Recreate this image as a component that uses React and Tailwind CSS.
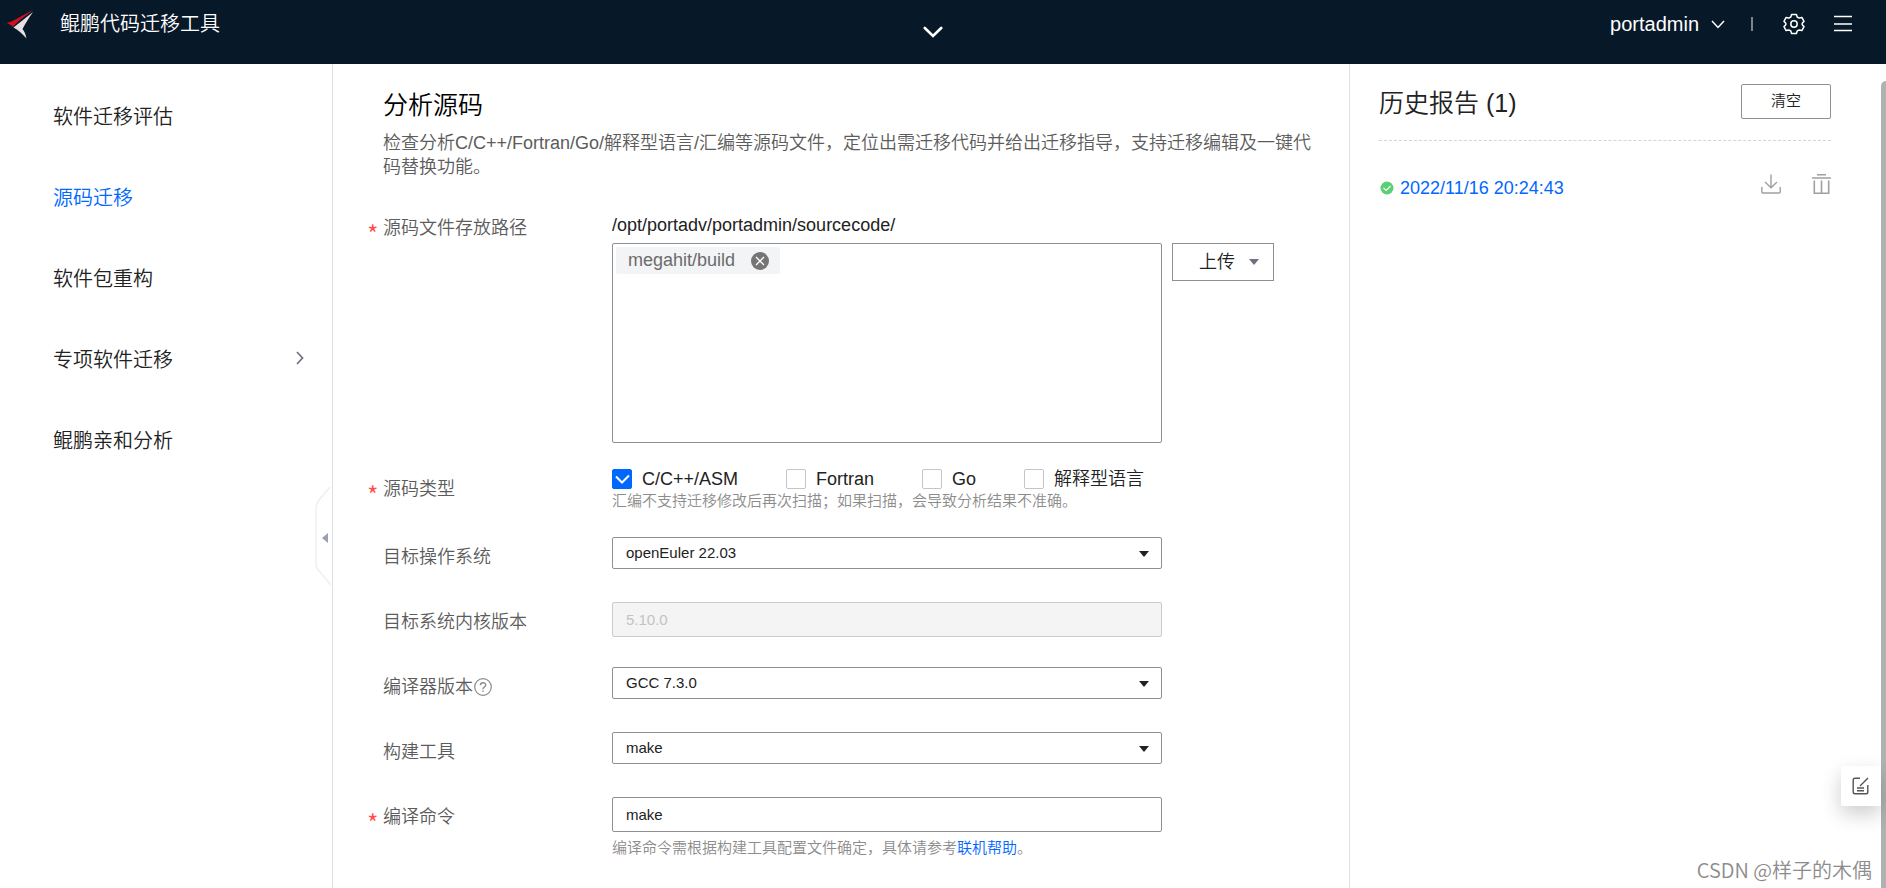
import React, { useState } from 'react';

const menuItems = [
  { label: '软件迁移评估' },
  { label: '源码迁移', active: true },
  { label: '软件包重构' },
  { label: '专项软件迁移', children: true },
  { label: '鲲鹏亲和分析' },
];

const sourceTypes = ['C/C++/ASM', 'Fortran', 'Go', '解释型语言'];

const Logo = () => (
  <svg width="28" height="30" viewBox="0 0 28 30" aria-hidden="true">
    <path d="M27.5 0.5 L13 8.5 C8 11.5 4 13.5 0.5 14 C3 15 5.5 16 7 18 C13 11 20 7 27.5 0.5 Z" fill="#d0111b" />
    <path d="M27 3 L7.5 18.5 C12 21 16 24.5 20.5 29.5 C19.5 25 18.5 22.5 16.5 20 C19.5 14 23 9 27 3 Z" fill="#e2e2e2" />
  </svg>
);

const GearIcon = () => (
  <svg width="22" height="22" viewBox="0 0 22 22" fill="none" stroke="#fff" strokeWidth="1.5" strokeLinejoin="round" aria-hidden="true">
    <path d="M8.6 1.5 H13.4 L14.2 4 L16.2 5.1 L18.9 4.4 L21 8.4 L19.2 10.2 V11.8 L21 13.6 L18.9 17.6 L16.2 16.9 L14.2 18 L13.4 20.5 H8.6 L7.8 18 L5.8 16.9 L3.1 17.6 L1 13.6 L2.8 11.8 V10.2 L1 8.4 L3.1 4.4 L5.8 5.1 L7.8 4 Z" />
    <circle cx="11" cy="11" r="3.2" />
  </svg>
);

const MenuIcon = () => (
  <svg width="18" height="18" viewBox="0 0 18 18" stroke="#fff" strokeWidth="1.3" aria-hidden="true">
    <path d="M0 1.5 H18 M0 9 H18 M0 15.5 H18" />
  </svg>
);

const Header = () => (
  <header className="bg-[#071829] text-white h-16 flex items-start pl-[6px] pr-[34px] shrink-0">
    <div className="flex items-center h-12 gap-[26px] flex-1">
      <Logo />
      <h1 className="text-xl leading-6">鲲鹏代码迁移工具</h1>
    </div>
    <button type="button" aria-label="展开" className="mt-[26px] ml-2">
      <svg width="20" height="13" viewBox="0 0 20 13" fill="none" stroke="#fff" strokeWidth="2.6" strokeLinecap="round" aria-hidden="true">
        <path d="M1.8 2 L10 10 L18.2 2" />
      </svg>
    </button>
    <div className="flex items-center justify-end h-12 flex-1">
      <button type="button" className="flex items-center gap-3 text-xl leading-6">
        portadmin
        <svg width="14" height="9" viewBox="0 0 14 9" fill="none" stroke="#fff" strokeWidth="1.5" aria-hidden="true">
          <path d="M1 1 L7 7.5 L13 1" />
        </svg>
      </button>
      <span className="w-[2px] h-[14px] bg-[#7d858c] ml-[26px] mr-[30px]" />
      <button type="button" aria-label="设置">
        <GearIcon />
      </button>
      <button type="button" aria-label="菜单" className="ml-[29px]">
        <MenuIcon />
      </button>
    </div>
  </header>
);

const Sidebar = () => (
  <aside className="relative w-[333px] shrink-0 border-r border-[#dfe1e9]">
    <nav className="flex flex-col pt-[12px]">
      {menuItems.map((item) => (
        <a
          key={item.label}
          href="#"
          className={`flex items-center justify-between h-[81px] pl-[53px] pr-7 text-xl ${
            item.active ? 'text-[#0067ff]' : 'text-[#222]'
          }`}
        >
          {item.label}
          {item.children && (
            <svg width="8" height="14" viewBox="0 0 8 14" className="mb-1" fill="none" stroke="#71757f" strokeWidth="1.8" aria-hidden="true">
              <path d="M1 1 L6.5 7 L1 13" />
            </svg>
          )}
        </a>
      ))}
    </nav>
    {/* collapse handle */}
    <button type="button" aria-label="收起" className="absolute right-0 top-[420px]">
      <svg width="18" height="104" viewBox="0 0 18 104" aria-hidden="true">
        <path d="M16 3 L5 16 Q2 20 2 25 V80 Q2 84 5 87 L17 101" fill="#fff" stroke="#f0f0f1" strokeWidth="1.6" />
        <path d="M14 49 V59 L8 54 Z" fill="#9a9fb2" />
      </svg>
    </button>
  </aside>
);

const Row = ({ label, htmlFor, required, help, className = '', children }) => (
  <div className={`flex items-start ${className}`}>
    <div className="w-[245px] shrink-0 flex items-center h-10 text-[#5c5c5c]">
      <span className="w-4 text-[25px] leading-5 pt-[10px] text-[#ff4d4f] font-['Noto_Sans_CJK_SC',sans-serif]">{required && '*'}</span>
      <label htmlFor={htmlFor}>{label}</label>
      {help && (
        <button type="button" aria-label="帮助" className="ml-px">
          <svg width="18" height="18" viewBox="0 0 18 18" fill="none" stroke="#8a8a8a" strokeWidth="1.2" aria-hidden="true">
            <circle cx="9" cy="9" r="8.3" />
            <path d="M6.4 7.2 C6.4 3.9 11.7 3.9 11.7 7 C11.7 9 9 9 9 11.2 M9 12.6 V14" strokeWidth="1.4" />
          </svg>
        </button>
      )}
    </div>
    {children}
  </div>
);

const Select = ({ id, value }) => (
  <div className="relative w-[550px]">
    <select
      id={id}
      defaultValue={value}
      className="block appearance-none w-full h-8 rounded-xs border border-[#8f9094] bg-white pl-[13px] pr-8 text-[15px] text-[#222]"
    >
      <option>{value}</option>
    </select>
    <svg width="10" height="6" viewBox="0 0 10 6" className="absolute right-[13px] top-[14px] pointer-events-none" aria-hidden="true">
      <path d="M0 0 H10 L5 6 Z" fill="#222" />
    </svg>
  </div>
);

const AnalysisForm = () => {
  const [checked, setChecked] = useState(['C/C++/ASM']);

  const toggle = (type) =>
    setChecked((prev) => (prev.includes(type) ? prev.filter((t) => t !== type) : [...prev, type]));

  return (
    <main className="flex-1 min-w-0 pl-[34px] pr-8 text-[18px] text-[#222]">
      <div className="pl-4 pt-[25px]">
        <h2 className="text-[25px] leading-8 text-black">分析源码</h2>
        <p className="mt-[10px] text-[#5c5c5c] leading-6">
          检查分析C/C++/Fortran/Go/解释型语言/汇编等源码文件，定位出需迁移代码并给出迁移指导，支持迁移编辑及一键代码替换功能。
        </p>
      </div>

      <form className="pt-[29px]">
        <Row label="源码文件存放路径" required htmlFor="path">
          <div>
            <p className="leading-8 pt-px mb-[2px]">/opt/portadv/portadmin/sourcecode/</p>
            <div className="flex items-start gap-[10px]">
              <div id="path" className="w-[550px] h-[200px] rounded-xs border border-[#8f9094] p-[3px]">
                <span className="inline-flex items-center gap-4 h-[27px] rounded-xs bg-[#f3f4f6] pl-3 pr-[11px] text-[#6b6b6b]">
                  megahit/build
                  <button type="button" aria-label="移除">
                    <svg width="18" height="18" viewBox="0 0 18 18" aria-hidden="true">
                      <circle cx="9" cy="9" r="9" fill="#757575" />
                      <path d="M5 5 L13 13 M13 5 L5 13" stroke="#fff" strokeWidth="1.4" />
                    </svg>
                  </button>
                </span>
              </div>
              <button type="button" className="flex items-center gap-[14px] h-[38px] border border-[#8f9094] pl-[26px] pr-[14px]">
                上传
                <svg width="10" height="6" viewBox="0 0 10 6" aria-hidden="true">
                  <path d="M0 0 H10 L5 6 Z" fill="#6c7080" />
                </svg>
              </button>
            </div>
          </div>
        </Row>

        <Row label="源码类型" required className="pt-[26px]">
          <div className="h-[68px]">
            <div className="flex items-center gap-12 h-5">
              {sourceTypes.map((type) => (
                <label key={type} className="flex items-center gap-[10px] leading-5">
                  <span className="relative flex">
                    <input
                      type="checkbox"
                      checked={checked.includes(type)}
                      onChange={() => toggle(type)}
                      className="appearance-none size-5 rounded-xs border border-[#c3c5c9] bg-white checked:border-[#0067ff] checked:bg-[#0067ff]"
                    />
                    {checked.includes(type) && (
                      <svg width="20" height="20" viewBox="0 0 20 20" fill="none" stroke="#fff" strokeWidth="2" className="absolute inset-0 pointer-events-none" aria-hidden="true">
                        <path d="M4 7.5 L10 13.5 L17 6.5" />
                      </svg>
                    )}
                  </span>
                  {type}
                </label>
              ))}
            </div>
            <p className="text-[15px] leading-6 text-[#8c8c8c]">汇编不支持迁移修改后再次扫描；如果扫描，会导致分析结果不准确。</p>
          </div>
        </Row>

        <div className="flex flex-col gap-[25px]">
          <Row label="目标操作系统" htmlFor="os">
            <Select id="os" value="openEuler 22.03" />
          </Row>
          <Row label="目标系统内核版本" htmlFor="kernel">
            <input
              id="kernel"
              disabled
              defaultValue="5.10.0"
              className="w-[550px] h-[35px] rounded-xs border border-[#cbcbcb] bg-[#f4f4f4] px-[13px] text-[15px] text-[#c3c3c3]"
            />
          </Row>
          <Row label="编译器版本" htmlFor="compiler" help>
            <Select id="compiler" value="GCC 7.3.0" />
          </Row>
          <Row label="构建工具" htmlFor="tool">
            <Select id="tool" value="make" />
          </Row>
          <Row label="编译命令" required htmlFor="command">
            <div>
              <input
                id="command"
                defaultValue="make"
                className="block w-[550px] h-[35px] rounded-xs border border-[#8f9094] px-[13px] text-[15px]"
              />
              <p className="mt-1 text-[15px] leading-6 text-[#8c8c8c]">
                编译命令需根据构建工具配置文件确定，具体请参考
                <a href="#" className="text-[#0067ff]">联机帮助</a>。
              </p>
            </div>
          </Row>
        </div>
      </form>
    </main>
  );
};

const HistoryPanel = () => (
  <aside className="relative w-[537px] shrink-0 border-l border-[#dfe1e9] pl-[29px] pr-[55px] text-[#222]">
    <div className="flex items-start justify-between h-[77px] pt-5 border-b border-dashed border-[#d4d4d4]">
      <h2 className="text-[25px] leading-[38px]">历史报告 (1)</h2>
      <button type="button" className="w-[90px] h-[35px] rounded-xs border border-[#8f9094] text-[15px]">
        清空
      </button>
    </div>
    <div className="flex items-start pt-[33px]">
      <a href="#" className="flex items-center gap-[6px] pl-px text-[18px] leading-7 text-[#0067ff]">
        <svg width="14" height="14" viewBox="0 0 14 14" aria-hidden="true">
          <circle cx="7" cy="7" r="6.5" fill="#5ad074" />
          <path d="M3.5 7 L6.2 9.4 L10.6 5" fill="none" stroke="#fff" strokeWidth="1.1" />
        </svg>
        2022/11/16 20:24:43
      </a>
      <button type="button" aria-label="下载" className="ml-auto">
        <svg width="20" height="20" viewBox="0 0 20 20" fill="none" stroke="#a0a0a0" strokeWidth="1.4" aria-hidden="true">
          <path d="M10 0.5 V13.5 M4 8 L10 13.8 L16 8 M0.8 13 V18 Q0.8 19 1.8 19 H18.2 Q19.2 19 19.2 18 V13" />
        </svg>
      </button>
      <button type="button" aria-label="删除" className="ml-[31px]">
        <svg width="19" height="20" viewBox="0 0 19 20" fill="none" stroke="#a0a0a0" strokeWidth="1.6" aria-hidden="true">
          <path d="M5 0.8 H14 M0 4 H19 M2.3 6.5 V19.2 H16.7 V6.5 M9.5 6.5 V19" />
        </svg>
      </button>
    </div>
  </aside>
);

const App = () => (
  <div className="relative min-h-screen flex flex-col overflow-hidden bg-white font-[350] font-['Liberation_Sans','Noto_Sans_CJK_SC',sans-serif]">
    <Header />
    <div className="flex flex-1">
      <Sidebar />
      <AnalysisForm />
      <HistoryPanel />
    </div>

    {/* scrollbar thumb */}
    <div className="absolute right-0 top-[81px] bottom-0 w-[5px] rounded-tl-full bg-[#b1b1b1]" />

    <button type="button" aria-label="反馈" className="absolute right-[5px] bottom-[82px] size-10 flex items-center justify-center rounded-l-xs bg-white shadow-[0_8px_20px_rgba(0,0,0,0.2)]">
      <svg width="18" height="18" viewBox="0 0 18 18" fill="none" stroke="#555" strokeWidth="1.4" aria-hidden="true">
        <path d="M8 1.2 H3 Q1.2 1.2 1.2 3 V15 Q1.2 16.8 3 16.8 H14 Q15.8 16.8 15.8 15 V8 M8 9 L16 1 M5 11 H12 M5 13.8 H12" />
      </svg>
    </button>

    <span className="absolute right-[14px] bottom-1 text-xl leading-7 text-[#8c8c8c] font-['Noto_Sans_CJK_SC',sans-serif]">CSDN @样子的木偶</span>
  </div>
);

export default App;
